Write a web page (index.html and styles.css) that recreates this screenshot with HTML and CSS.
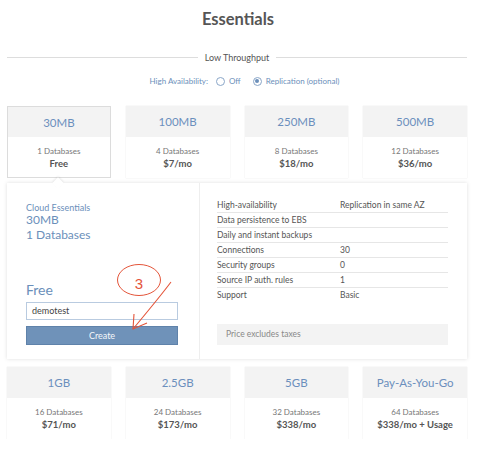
FILE: index.html
```html
<!DOCTYPE html>
<html>
<head>
<meta charset="utf-8">
<link rel="stylesheet" href="styles.css">
</head>
<body>
<div class="page">
  <h1 class="title">Essentials</h1>
  <div class="divider"><span class="line"></span><span class="divider-label">Low Throughput</span><span class="line"></span></div>
  <div class="ha">
    <span class="ha-label">High Availability:</span>
    <span class="radio"></span><span class="opt">Off</span>
    <span class="radio on"></span><span class="opt">Replication (optional)</span>
  </div>

  <div class="cards top">
    <div class="card selected"><div class="card-head">30MB</div><div class="card-body"><div class="dbs">1 Databases</div><div class="price">Free</div></div></div>
    <div class="card"><div class="card-head">100MB</div><div class="card-body"><div class="dbs">4 Databases</div><div class="price">$7/mo</div></div></div>
    <div class="card"><div class="card-head">250MB</div><div class="card-body"><div class="dbs">8 Databases</div><div class="price">$18/mo</div></div></div>
    <div class="card"><div class="card-head">500MB</div><div class="card-body"><div class="dbs">12 Databases</div><div class="price">$36/mo</div></div></div>
  </div>

  <div class="panel">
    <div class="panel-left">
      <div class="summary">
        <div class="sum-small">Cloud Essentials</div>
        <div class="sum-big">30MB</div>
        <div class="sum-big">1 Databases</div>
      </div>
      <div class="buy">
        <div class="buy-price">Free</div>
        <div class="input">demotest</div>
        <div class="btn">Create</div>
      </div>
      <svg class="annot" width="80" height="80" viewBox="0 0 80 80">
        <ellipse cx="22" cy="17" rx="21.5" ry="15.5" fill="none" stroke="#e4553a" stroke-width="1"/>
        <text x="22" y="26" text-anchor="middle" class="annot-num">3</text>
        <path d="M54 19 C45 31 31 48 16 66" fill="none" stroke="#e4553a" stroke-width="1.1"/>
        <path d="M17 51 L16 66 L30 60" fill="none" stroke="#e4553a" stroke-width="1.1"/>
      </svg>
    </div>
    <div class="panel-right">
      <div class="specs">
        <div class="row"><span>High-availability</span><span>Replication in same AZ</span></div>
        <div class="row"><span>Data persistence to EBS</span><span></span></div>
        <div class="row"><span>Daily and instant backups</span><span></span></div>
        <div class="row"><span>Connections</span><span>30</span></div>
        <div class="row"><span>Security groups</span><span>0</span></div>
        <div class="row"><span>Source IP auth. rules</span><span>1</span></div>
        <div class="row"><span>Support</span><span>Basic</span></div>
      </div>
      <div class="note">Price excludes taxes</div>
    </div>
  </div>

  <div class="cards bottom">
    <div class="card"><div class="card-head">1GB</div><div class="card-body"><div class="dbs">16 Databases</div><div class="price">$71/mo</div></div></div>
    <div class="card"><div class="card-head">2.5GB</div><div class="card-body"><div class="dbs">24 Databases</div><div class="price">$173/mo</div></div></div>
    <div class="card"><div class="card-head">5GB</div><div class="card-body"><div class="dbs">32 Databases</div><div class="price">$338/mo</div></div></div>
    <div class="card"><div class="card-head">Pay-As-You-Go</div><div class="card-body"><div class="dbs">64 Databases</div><div class="price">$338/mo + Usage</div></div></div>
  </div>
</div>
</body>
</html>
```
FILE: styles.css
```css
* { box-sizing: border-box; }
html, body { margin: 0; padding: 0; background: #fff; }
body { font-family: Lato, "Open Sans", sans-serif; color: #555; }
.page { width: 478px; padding: 9px 11px 0 7px; }
.title { margin: 0; text-align: center; font-size: 16.5px; font-weight: 700; color: #555; line-height: 20px; padding-left: 2px; }
.divider { display: flex; align-items: center; margin-top: 22px; height: 12px; }
.line { flex: 1; height: 1px; background: #ddd; }
.divider-label { font-size: 9px; color: #555; padding: 0 7px; }
.ha { display: flex; align-items: center; justify-content: center; margin-top: 12px; height: 12px; font-size: 8px; color: #6b8fba; padding-left: 15px; }
.ha-label { margin-right: 8px; }
.radio { width: 9px; height: 9px; border: 1px solid #8aa6c8; border-radius: 50%; margin-right: 4px; position: relative; background: #fff; }
.radio.on::after { content: ""; position: absolute; left: 1.5px; top: 1.5px; width: 4px; height: 4px; border-radius: 50%; background: #6b8fba; }
.opt { margin-right: 12px; }
.opt:last-child { margin-right: 0; }
.cards { display: grid; grid-template-columns: repeat(4, 1fr); column-gap: 15px; }
.cards.top { margin-top: 19px; }
.cards.bottom { margin-top: 8px; }
.card { height: 72px; background: #fff; box-shadow: 0 0 1px rgba(0,0,0,0.15); text-align: center; }
.card.selected { border: 1px solid #dcdcdc; box-shadow: none; }
.card-head { height: 31px; background: #f3f3f3; color: #6b8fbd; font-size: 11.5px; line-height: 32px; }
.card.selected .card-head { height: 30px; line-height: 31px; }
.card-body { padding-top: 9px; }
.dbs { font-size: 8px; color: #777; line-height: 11px; }
.price { font-size: 9.5px; font-weight: 700; color: #555; line-height: 14px; }
.panel { position: relative; display: flex; margin-top: 5px; height: 176px; background: #fff; box-shadow: 0 0 4px rgba(0,0,0,0.13); }
.panel::before { content: ""; position: absolute; left: 47px; top: -4px; width: 8px; height: 8px; background: #fff; transform: rotate(45deg); box-shadow: -1px -1px 2px rgba(0,0,0,0.08); }
.panel-left { position: relative; width: 193px; border-right: 1px solid #eee; padding: 19px 21px 14px 19px; display: flex; flex-direction: column; justify-content: space-between; }
.sum-small { font-size: 9px; color: #6b8fba; line-height: 11px; }
.sum-big { font-size: 12px; color: #6b8fba; line-height: 14.5px; }
.buy-price { font-size: 14px; color: #6b8fba; line-height: 17px; margin-bottom: 4px; }
.input { height: 18px; border: 1px solid #b9cbe0; font-size: 9px; color: #444; line-height: 16px; padding-left: 5px; }
.btn { margin-top: 6px; height: 19px; background: #6f92b9; border: 1px solid #5f82aa; color: #f4f7fa; font-size: 9px; text-align: center; line-height: 17px; }
.annot { position: absolute; left: 110px; top: 80px; overflow: visible; }
.annot-num { font-family: "Liberation Sans", Arial, sans-serif; font-size: 15px; fill: #e4553a; }
.panel-right { flex: 1; padding: 15px 19px 14px 17px; display: flex; flex-direction: column; justify-content: space-between; }
.row { display: flex; height: 15px; line-height: 14px; border-bottom: 1px solid #e6e6e6; font-size: 8.5px; color: #555; }
.row:last-child { border-bottom: none; }
.row span:first-child { width: 123px; }
.note { height: 21px; background: #f3f3f3; font-size: 8.5px; color: #888; line-height: 21px; padding-left: 9px; }
```
